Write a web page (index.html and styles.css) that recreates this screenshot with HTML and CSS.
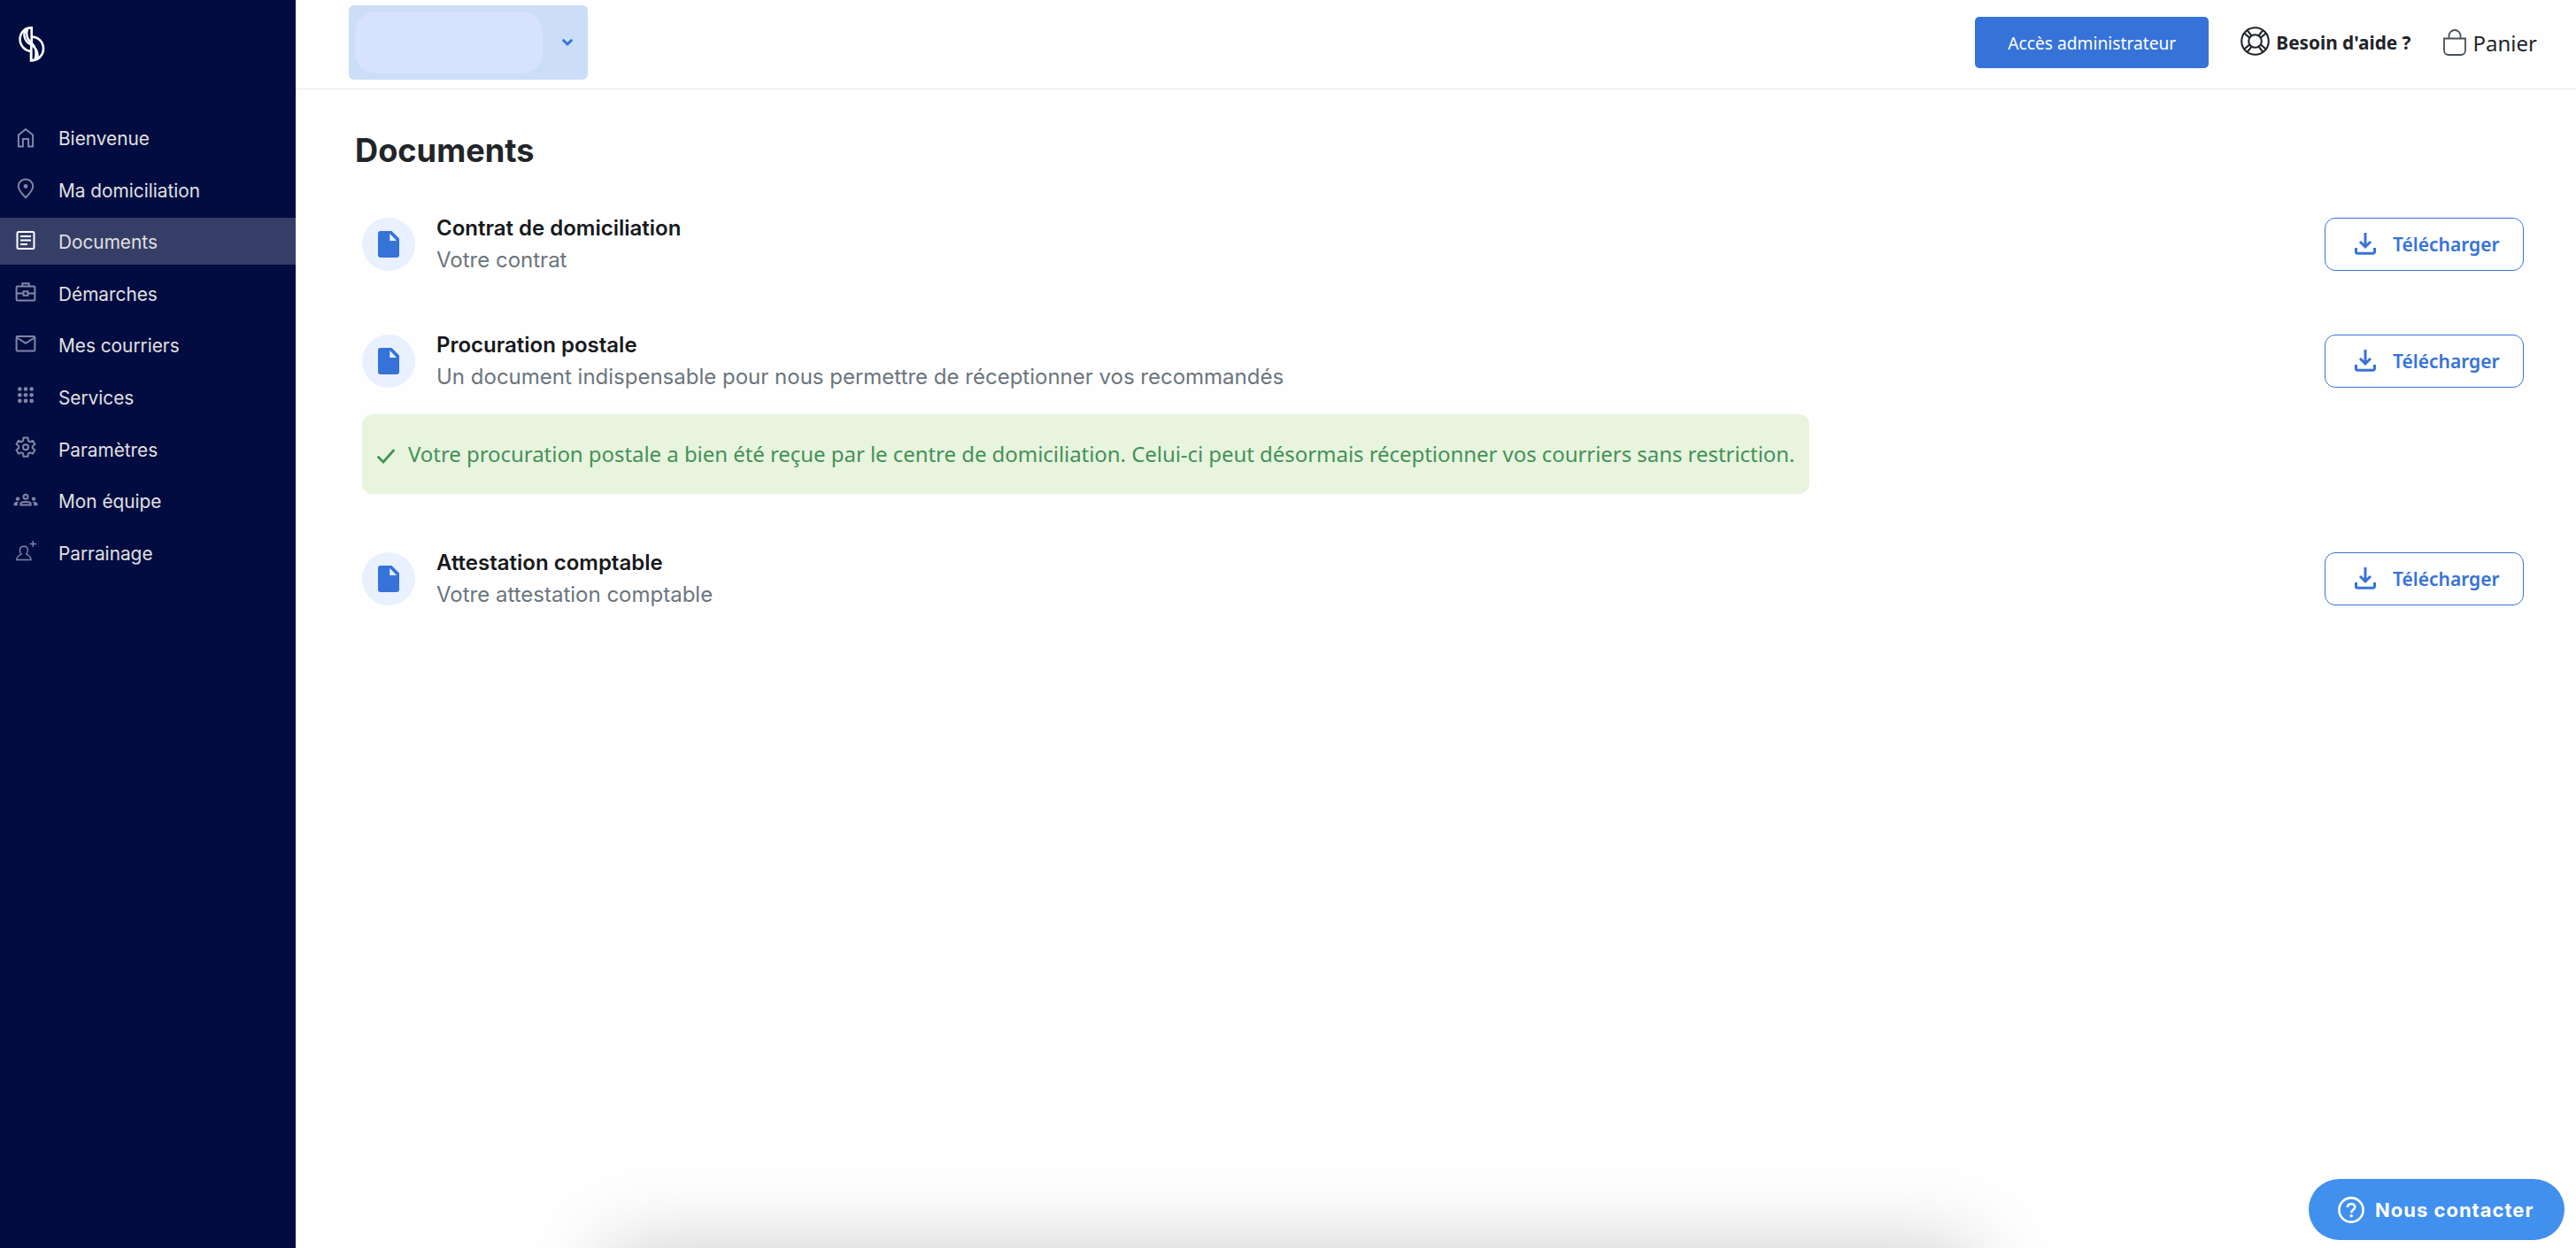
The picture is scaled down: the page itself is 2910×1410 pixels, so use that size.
FILE: index.html
```html
<!DOCTYPE html>
<html lang="fr">
<head>
  <meta charset="UTF-8">
  <meta name="viewport" content="width=device-width, initial-scale=1.0">
  <title>Documents</title>
  <link rel="stylesheet" href="styles.css">
</head>
<body>
  <!-- Shared icons -->
  <svg width="0" height="0" class="sprite">
    <symbol id="icon-file" viewBox="0 0 24 30">
      <path fill-rule="evenodd" d="M3 0h12.500L24 8.500V27a3 3 0 0 1-3 3H3a3 3 0 0 1-3-3V3a3 3 0 0 1 3-3zM13.300 3v8H21z"/>
    </symbol>
    <symbol id="icon-download" viewBox="0 0 24 25">
      <path d="M12 0v15M6 10l6 6 6-6M1.500 17v4.500a1.800 1.800 0 0 0 1.800 1.800h17.400a1.800 1.800 0 0 0 1.800-1.800V17" fill="none" stroke="currentColor" stroke-width="3"/>
    </symbol>
  </svg>

  <div class="layout">
    <!-- Sidebar -->
    <aside class="sidebar">
      <a href="#" class="logo">
        <svg width="30" height="40" viewBox="0 0 30 40" fill="none" stroke="#fff" stroke-width="2.600">
          <path d="M14.700 0v20M14 1.400C7 1.400 1.600 7 1.600 14.200 1.600 21.500 7 27.400 14 27.800V38.400C22 38.400 28 32.400 28 25 28 17.500 22.500 11.800 15.200 11.600M14.300 39V18"/>
          <path d="M7.500 3.500C4.500 11 8 18 14 20.500 20.500 24 23 31 20.500 37M10 2.500C8 9 9.500 14.500 14.500 18.500 19.500 22.500 20.500 30 18.500 37.500" stroke-width="2.400"/>
        </svg>
      </a>
      <nav class="menu">
        <a href="#" class="menu-item">
          <svg width="30" height="26" viewBox="0 0 30 26" fill="none" stroke="currentColor" stroke-width="2"><path d="M6.900 23.600V10.400L15 4l8.100 6.400v13.200h-5V15h-6.200v8.600z"/></svg>
          <span>Bienvenue</span>
        </a>
        <a href="#" class="menu-item">
          <svg width="30" height="26" viewBox="0 0 30 26" fill="none" stroke="currentColor" stroke-width="2"><path d="M15 23.300C9.500 18 6.800 14.200 6.800 10.600a8.200 8.200 0 0 1 16.400 0c0 3.600-2.700 7.400-8.200 12.700z"/><circle cx="15" cy="10.500" r="2.400" fill="currentColor" stroke="none"/></svg>
          <span>Ma domiciliation</span>
        </a>
        <a href="#" class="menu-item active">
          <svg width="30" height="26" viewBox="0 0 30 26" fill="none" stroke="currentColor" stroke-width="2"><rect x="5.500" y="3" width="19" height="19" rx="1.500"/><path d="M9 8h12M9 12.500h12M9 17h8"/></svg>
          <span>Documents</span>
        </a>
        <a href="#" class="menu-item">
          <svg width="30" height="26" viewBox="0 0 30 26" fill="none" stroke="currentColor" stroke-width="2"><rect x="4.600" y="6.500" width="20.800" height="16" rx="1.200"/><path d="M11.300 6.500V3.300h7.400v3.200M4.600 14.500H12M18 14.500h7.400"/><rect x="12.500" y="12.300" width="5" height="4.500"/></svg>
          <span>Démarches</span>
        </a>
        <a href="#" class="menu-item">
          <svg width="30" height="26" viewBox="0 0 30 26" fill="none" stroke="currentColor" stroke-width="2"><rect x="4.600" y="4" width="20.800" height="16.500" rx="1.200"/><path d="M5 5.500l10 6.300 10-6.300"/></svg>
          <span>Mes courriers</span>
        </a>
        <a href="#" class="menu-item">
          <svg width="30" height="26" viewBox="0 0 30 26" fill="currentColor"><circle cx="8.300" cy="5.500" r="2.300"/><circle cx="15" cy="5.500" r="2.300"/><circle cx="21.700" cy="5.500" r="2.300"/><circle cx="8.300" cy="12.200" r="2.300"/><circle cx="15" cy="12.200" r="2.300"/><circle cx="21.700" cy="12.200" r="2.300"/><circle cx="8.300" cy="18.900" r="2.300"/><circle cx="15" cy="18.900" r="2.300"/><circle cx="21.700" cy="18.900" r="2.300"/></svg>
          <span>Services</span>
        </a>
        <a href="#" class="menu-item">
          <svg width="30" height="26" viewBox="0 0 30 26" fill="none" stroke="currentColor" stroke-width="2"><path d="M12.600 1.600h4.800l.6 3.400 1.900 1.100 3.200-1.200 2.300 4-2.600 2.200v2.200l2.600 2.200-2.300 4-3.200-1.200-1.900 1.100-.6 3.400h-4.800l-.6-3.400-1.900-1.100-3.200 1.200-2.300-4 2.600-2.200v-2.200L4.600 8.900l2.300-4 3.200 1.200L12 5z"/><circle cx="15" cy="12.200" r="3"/></svg>
          <span>Paramètres</span>
        </a>
        <a href="#" class="menu-item">
          <svg width="30" height="26" viewBox="0 0 30 26" fill="none" stroke="currentColor" stroke-width="2"><circle cx="15" cy="9.200" r="2.500"/><path d="M9.300 18.400v-1.300c0-1.300 2.500-2.200 5.700-2.200s5.700.9 5.700 2.200v1.300z"/><g fill="currentColor" stroke="none"><circle cx="6" cy="11.600" r="2.200"/><circle cx="24" cy="11.600" r="2.200"/><path d="M1.600 19.300v-2c0-1.500 2-2.600 5.200-2.500-.7.700-1 1.500-1 2.500v2zM28.400 19.300v-2c0-1.500-2-2.600-5.200-2.500.7.700 1 1.500 1 2.500v2z"/></g></svg>
          <span>Mon équipe</span>
        </a>
        <a href="#" class="menu-item">
          <svg width="30" height="26" viewBox="0 0 30 26" fill="none" stroke="currentColor" stroke-width="1.400"><path d="M4.800 22.500c.4-3.500 2.500-5.300 5.200-6.300-1.300-1.600-1.800-3.300-1.600-5 .2-2.500 1.900-4 4.500-4s4.300 1.500 4.500 4c.2 1.700-.3 3.400-1.600 5 2.700 1 4.800 2.800 5.200 6.300zM19.700 4.500H27M23.300 1v7"/></svg>
          <span>Parrainage</span>
        </a>
      </nav>
    </aside>

    <div class="page">
      <!-- Top bar -->
      <header class="topbar">
        <button type="button" class="company-select">
          <span class="company-name"></span>
          <svg width="12" height="8" viewBox="0 0 12 8" fill="none" stroke="currentColor" stroke-width="3" stroke-linecap="round" stroke-linejoin="round"><path d="M1.700 1.700L6 6l4.300-4.300"/></svg>
        </button>
        <div class="topbar-actions">
          <button type="button" class="admin-button">Accès administrateur</button>
          <a href="#" class="help-link">
            <svg width="33" height="33" viewBox="0 0 33 33" fill="none" stroke="currentColor" stroke-width="2.100"><circle cx="16.500" cy="16.500" r="15.300"/><circle cx="16.500" cy="16.500" r="7.300"/><path d="M4.500 7.800l5.800 4.800M7.800 4.500l4.800 5.800M28.500 7.800l-5.800 4.800M25.200 4.500l-4.800 5.800M4.500 25.200l5.800-4.800M7.800 28.500l4.800-5.800M28.500 25.200l-5.800-4.800M25.200 28.500l-4.800-5.800"/></svg>
            <span>Besoin d'aide ?</span>
          </a>
          <a href="#" class="cart-link">
            <svg width="26" height="30" viewBox="0 0 26 30" fill="none" stroke="#495057" stroke-width="1.800"><path d="M1 10.500h24V24a5 5 0 0 1-5 5H6a5 5 0 0 1-5-5zM6.500 10.500V7.500a6.500 6.500 0 0 1 13 0v3"/></svg>
            <span>Panier</span>
          </a>
        </div>
      </header>

      <main class="content">
        <h1>Documents</h1>

        <section class="document">
          <div class="document-icon"><svg width="24" height="30"><use href="#icon-file"/></svg></div>
          <div class="document-text">
            <h2>Contrat de domiciliation</h2>
            <p>Votre contrat</p>
          </div>
          <button type="button" class="download-button"><svg width="24" height="25"><use href="#icon-download"/></svg><span>Télécharger</span></button>
        </section>

        <section class="document">
          <div class="document-icon"><svg width="24" height="30"><use href="#icon-file"/></svg></div>
          <div class="document-text">
            <h2>Procuration postale</h2>
            <p>Un document indispensable pour nous permettre de réceptionner vos recommandés</p>
          </div>
          <button type="button" class="download-button"><svg width="24" height="25"><use href="#icon-download"/></svg><span>Télécharger</span></button>
        </section>

        <div class="alert">
          <svg width="20" height="17" viewBox="0 0 20 17" fill="none" stroke="currentColor" stroke-width="2.800" stroke-linecap="round"><path d="M1.500 9.500l5.500 5.500L18.500 2"/></svg>
          <span>Votre procuration postale a bien été reçue par le centre de domiciliation. Celui-ci peut désormais réceptionner vos courriers sans restriction.</span>
        </div>

        <section class="document">
          <div class="document-icon"><svg width="24" height="30"><use href="#icon-file"/></svg></div>
          <div class="document-text">
            <h2>Attestation comptable</h2>
            <p>Votre attestation comptable</p>
          </div>
          <button type="button" class="download-button"><svg width="24" height="25"><use href="#icon-download"/></svg><span>Télécharger</span></button>
        </section>
      </main>
    </div>
  </div>

  <div class="bottom-shadow"></div>

  <!-- Contact widget -->
  <button type="button" class="contact-button">
    <svg width="30" height="30" viewBox="0 0 30 30" fill="none" stroke="currentColor" stroke-width="2.600"><circle cx="15" cy="15" r="13.600"/><path d="M10.800 12c.2-2.300 1.800-3.700 4.200-3.700s4.200 1.400 4.200 3.500c0 3-4 3-4 6.500"/><circle cx="15.200" cy="21.800" r="1.700" fill="currentColor" stroke="none"/></svg>
    <span>Nous contacter</span>
  </button>
</body>
</html>
```
FILE: styles.css
```css
* {
  box-sizing: border-box;
}

body {
  margin: 0;
  height: 1410px;
  overflow: hidden;
  font-family: "Noto Sans", sans-serif;
  color: #212529;
  background: #fefefe;
}

a {
  color: inherit;
  text-decoration: none;
}

button {
  font-family: inherit;
  border: none;
  cursor: pointer;
}

svg {
  display: block;
  flex-shrink: 0;
}

.sprite {
  position: absolute;
}

.layout {
  display: flex;
  height: 100%;
}

/* Sidebar */
.sidebar {
  width: 334px;
  flex-shrink: 0;
  background: #020c41;
}

.logo {
  display: block;
  padding: 30px 0 0 21px;
  height: 129px;
}

.menu {
  display: flex;
  flex-direction: column;
  gap: 5.600px;
}

.menu-item {
  display: flex;
  align-items: center;
  gap: 22px;
  height: 53px;
  padding-left: 14px;
  font-family: Inter, sans-serif;
  font-size: 20.800px;
  color: #e0e0e0;
}

.menu-item svg {
  margin-bottom: 2px;
  color: #8186a3;
}

.menu-item span {
  padding-top: 2px;
}

.menu-item.active {
  background: #363e68;
}

.menu-item.active svg {
  color: #fff;
}

/* Top bar */
.page {
  flex: 1;
}

.topbar {
  display: flex;
  justify-content: space-between;
  height: 101px;
  padding: 0 44px 0 60px;
  border-bottom: 1px solid #e8e8e8;
}

.company-select {
  display: flex;
  align-items: center;
  gap: 22px;
  width: 270px;
  height: 84px;
  margin-top: 6px;
  padding: 0 17px 0 7px;
  border-radius: 6px;
  color: #3673d9;
  background: #ccdef7;
}

.company-name {
  width: 212px;
  height: 70px;
  border-radius: 24px;
  background: #d7e2fd;
}

.topbar-actions {
  display: flex;
  align-items: center;
  height: 96px;
}

.admin-button {
  width: 264px;
  height: 58px;
  padding: 0;
  border-radius: 5px;
  font-size: 19.200px;
  color: #fff;
  background: #3673d9;
}

.help-link {
  display: flex;
  align-items: center;
  gap: 7px;
  margin-left: 36px;
  font-size: 20.800px;
  font-weight: 700;
}

.help-link svg {
  margin-bottom: 3px;
}

.cart-link {
  display: flex;
  align-items: center;
  gap: 8px;
  margin-left: 36px;
  font-size: 24px;
}

/* Documents */
.content {
  padding: 47px 59px 0 67px;
}

h1 {
  margin: 0 0 54px;
  font-family: Inter, sans-serif;
  font-size: 36.200px;
  line-height: 44px;
  font-weight: 700;
}

.document {
  display: flex;
  align-items: flex-start;
  height: 60px;
  margin: 0 0 72px 8px;
}

.document-icon {
  display: flex;
  align-items: center;
  justify-content: center;
  width: 60px;
  height: 60px;
  border-radius: 50%;
  background: #e9f0fe;
}

.document-icon svg {
  fill: #3673d9;
}

.document-text {
  flex: 1;
  margin: -6px 0 0 24px;
  font-family: Inter, sans-serif;
  font-size: 24px;
  line-height: 36px;
  font-variant-ligatures: none;
}

.document-text h2 {
  margin: 0;
  font-size: 24px;
  font-weight: 600;
  color: #17191c;
}

.document-text p {
  margin: 0;
  color: #6c757d;
}

.download-button {
  display: flex;
  align-items: center;
  gap: 19px;
  width: 225px;
  height: 60px;
  padding: 0 0 1px 33px;
  border: 1px solid #3673d9;
  border-radius: 12px;
  font-size: 21px;
  font-weight: 600;
  color: #3673d9;
  background: #fff;
}

.alert {
  display: flex;
  align-items: center;
  gap: 15px;
  width: 1635px;
  height: 90px;
  margin: -42px 0 66px 8px;
  padding: 0 17px 2px;
  border-radius: 12px;
  font-size: 24px;
  letter-spacing: -0.050px;
  white-space: nowrap;
  color: #439259;
  background: #e8f4dd;
}

.alert svg {
  margin-top: 7px;
}

/* Shadow of the panel that sits below the fold */
.bottom-shadow {
  position: fixed;
  top: 100%;
  left: 688px;
  width: 1542px;
  height: 200px;
  box-shadow: 0 0 90px rgba(0, 0, 0, 0.2);
}

.contact-button {
  position: fixed;
  right: 13px;
  bottom: 9px;
  display: flex;
  align-items: center;
  gap: 12px;
  width: 289px;
  height: 69px;
  padding: 0 0 0 33px;
  border-radius: 35px;
  font-family: Inter, sans-serif;
  font-size: 22px;
  font-weight: 700;
  letter-spacing: 1px;
  color: #fff;
  background: #4190ee;
}
```
